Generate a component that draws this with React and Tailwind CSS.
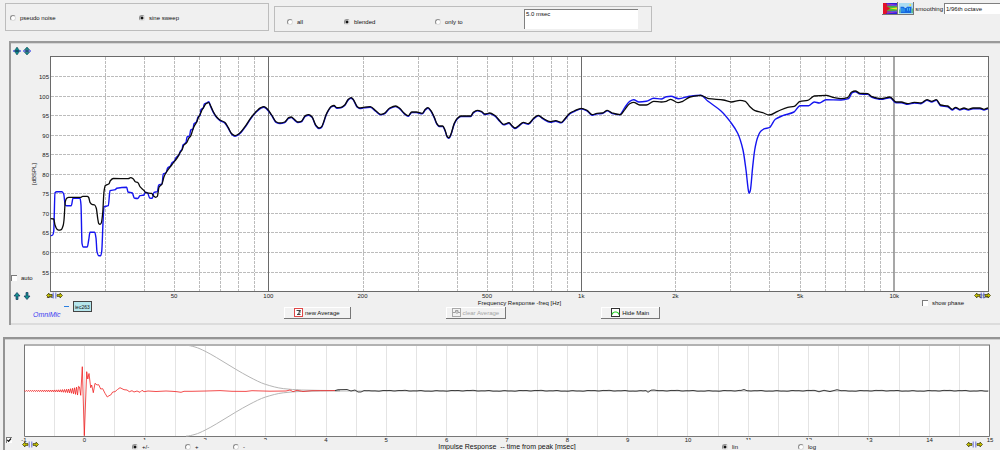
import React, { useState } from "react";

const BLACK_TRACE = [
  50.7,218.7, 53.7,219, 55,225, 57,229.3, 58.7,230.2, 61.3,229.6, 63.3,225, 64,220, 65.3,201.7, 66.7,198.2, 68.7,197.3, 81,197.3,
  82.7,196.3, 87.3,196.3, 88.7,197.5, 90,202.3, 92,204.3, 94.7,205, 96.3,208.3, 97.7,218.3, 98.7,223.5, 100,224.3, 101.3,223,
  102.7,213, 104,191.7, 105.3,185.5, 109,183.7, 110.3,180.7, 113.3,178.5, 128.3,178.6, 130.7,177.6, 133.3,179, 135.3,181.7,
  138,182.7, 140,186.7, 144,190.5, 145.7,192.7, 151.7,193.4, 153.3,195.7, 155.7,197.3, 157.3,196.4, 159,187.3, 162,184,
  164,176.7, 166.7,171.7, 171.7,165, 174.3,161.7, 176.7,158.7, 180,152.7, 182,150, 183.7,145.3, 186.7,142.7, 188.7,138.3,
  190.7,136, 192.7,130, 194.3,126, 196.7,122, 198.7,116.7, 200.3,114, 202,110, 204,106.7, 206,103.7, 208.7,102.7, 210.7,106,
  213.3,111.7, 216.7,117, 220,120, 224.7,122.3, 228.3,127.7, 231.7,133.7, 235,135.7, 239,133.7, 245,126.7, 251,117.7,
  256.7,111, 260.7,107.7, 263.7,106.7, 266.3,108, 271.7,115, 276,121.7, 280,123, 284.7,122, 288.7,117.7, 291.3,117,
  294.3,119.3, 297.7,122, 301.3,121.3, 305.3,115.7, 308.7,114.7, 312,116.7, 315.7,125, 319,128, 321.3,127, 326.7,113.3,
  331.3,106.3, 334,105.5, 337,107.7, 341,107.3, 344.7,105, 348.3,99.3, 351,97.7, 353,99, 357.3,106.7, 359.7,108, 363.7,107.3,
  370.3,106.7, 375.7,110.7, 380.7,114.3, 384.3,113.3, 389.7,108, 395.7,106, 399.7,108.3, 404.3,113.3, 408.3,115.7, 411.7,112,
  416.3,112, 422.3,113.3, 425.3,109.3, 428,107.7, 431,110.7, 434.3,117.3, 436.7,123.3, 439,126, 442.7,126, 445,130,
  447.3,136.7, 449,137.7, 451,134, 454.3,123.3, 457.3,118.3, 461,116, 470.7,116, 473.3,112.3, 477.3,110.3, 481.3,111.3,
  485,114, 489.7,113, 494.7,115.3, 499.7,120.7, 503.7,124.3, 509,122.7, 512.3,126, 515,128, 518.7,125.7, 523.3,122.3,
  528.3,123.7, 533.7,118.3, 538.3,115.3, 543,118.3, 550.3,121.7, 555.7,120.7, 561.3,122.3, 565,118.7, 569.7,113.3,
  574.7,110.7, 581.3,108.3, 587,110.3, 592.3,114.7, 597,113.3, 602.3,113, 607.3,110.3, 612.3,113, 620.3,114.7, 625,109.3,
  629.7,103.7, 633.7,102.3, 639.7,105, 646.3,105, 653.7,101.3, 661.3,102, 666.3,101.3, 670.7,99.3, 678,102.7, 682.7,101.3,
  690,97, 700.7,95.3, 708.7,98.7, 723.3,100, 731.3,102, 740,100.3, 745.3,101.3, 749.3,106, 755,110.7, 762.7,112.7, 769.3,115,
  777.7,111.3, 787.7,107.3, 794.3,106.3, 800,101.3, 807.7,100.3, 814.3,96, 826,95.3, 834.3,97.7, 841,98.7, 847.7,97.7,
  851.3,92.3, 855.3,91, 860,93.3, 867.7,93.7, 872,96.7, 881,98.7, 890,97, 896,102, 901.3,102, 907.7,103.7, 914.3,102.3,
  921,103, 927,99.7, 931.7,101.3, 936.3,99.7, 940.7,105, 947.7,106, 952.3,109.3, 955.7,107.3, 959.7,109.3, 964,108,
  968.3,109.3, 973,108, 980,108, 984,109.3, 988,108,
];

const BLUE_LOW = [
  50.7,235.7, 52.7,235, 53.7,231.7, 55,192.7, 56.7,191.7, 62,191.7, 63.7,194, 65.3,205, 66.7,205.7, 71.3,205.7, 73,198.3,
  80,198.3, 81,205, 82,243.3, 83.3,247, 87.3,247, 88.7,240, 90,232.3, 94.7,232.3, 96,238, 97,251.7, 98.7,255.7, 100.7,255.7,
  101.7,251.7, 103,223, 104,206.7, 108.3,205.7, 110,190.7, 115.3,189.7, 116.7,188.3, 126.7,187.3, 128,192, 132.3,193,
  134.3,198, 137.7,198.5, 140,195.7, 144,195, 145.3,192.3, 147.7,193.3, 149.7,198, 152.3,198.3, 154,192.3, 157.3,191.7,
  158.7,185, 162,184, 163.3,174, 166,172.7, 167.7,168, 170.5,166, 172,162.7, 174.5,161, 176,157.7, 179,155, 180.5,151,
  182,149.5, 183,145, 186,142.5, 187,137, 189.5,136, 190.7,130, 193,129, 194,123.7, 196.5,122, 198,117, 200,115.5, 201,109.5,
  203.3,108, 204.3,104, 207,102.8, 208.8,101.6, 210.7,106.7,
];

const BLUE_HIGH = [
  619.7,114.7, 624.7,107.7, 629.7,101.3, 633.7,99.7, 639,102, 646.3,101.3, 653.7,98.3, 661.3,99, 666.3,96.7, 671,96.3,
  678.7,98.7, 689.3,96.3, 700.7,95.3, 707.7,101, 721,111, 731,122.7, 737.7,133.3, 743,150, 746,170, 748.7,192, 749.3,193.3,
  750.3,190.7, 752.7,166.7, 754.7,150, 757.7,137.3, 761,131, 764.7,128.7, 769.3,127.7, 775.3,119.3, 782.7,115.7, 794,112,
  800,105.7, 808.7,105.7, 814.3,102, 819.3,103, 826,99.7, 841,100, 848.7,98.7, 852,92.9,
];

const toPoints = (flat, dy = 0) => {
  const out = [];
  for (let i = 0; i < flat.length; i += 2) out.push([flat[i], flat[i + 1] + dy]);
  return out;
};

// Smooth curve through all points; vertical handles are kept inside each segment to avoid overshoot.
const smooth = (pts) => {
  const slope = pts.map((p, i) => {
    if (i === 0 || i === pts.length - 1) return 0;
    const a = (p[1] - pts[i - 1][1]) / (p[0] - pts[i - 1][0]);
    const b = (pts[i + 1][1] - p[1]) / (pts[i + 1][0] - p[0]);
    return a * b <= 0 ? 0 : (2 * a * b) / (a + b);
  });
  let d = `M${pts[0][0]} ${pts[0][1]}`;
  for (let i = 1; i < pts.length; i++) {
    const [x0, y0] = pts[i - 1];
    const [x1, y1] = pts[i];
    const h = (x1 - x0) / 3;
    d += `C${(x0 + h).toFixed(2)} ${(y0 + slope[i - 1] * h).toFixed(2)} ${(x1 - h).toFixed(2)} ${(y1 - slope[i] * h).toFixed(2)} ${x1} ${y1}`;
  }
  return d;
};

const blackPts = toPoints(BLACK_TRACE);
const bluePts = [
  ...toPoints(BLUE_LOW),
  ...toPoints(BLACK_TRACE, 0.6).filter(([x]) => x > 211 && x < 619),
  ...toPoints(BLUE_HIGH),
  ...toPoints(BLACK_TRACE, 0.7).filter(([x]) => x > 853),
];
const blackPath = smooth(blackPts);
const bluePath = smooth(bluePts);

const freqX = (f) => 50.5 + (Math.log10(f / 20) / 3) * 938;
const minorFreqs = [30, 40, 50, 60, 70, 80, 90, 200, 300, 400, 500, 600, 700, 800, 900, 2000, 3000, 4000, 5000, 6000, 7000, 8000, 9000];
const levels = [105, 100, 95, 90, 85, 80, 75, 70, 65, 60, 55];
const levelY = (db) => Math.floor(76.5 + (105 - db) * 3.91) + 0.5;
const freqLabels = [[50, "50"], [100, "100"], [200, "200"], [500, "500"], [1000, "1k"], [2000, "2k"], [5000, "5k"], [10000, "10k"]];

// Impulse response samples
const ringing = () => {
  const pts = [];
  for (let x = 24.5; x < 79; x += 1) {
    const t = (x - 24.5) / 54.5;
    const amp = 0.5 + 3.6 * Math.pow(t, 7) + 0.7 * t;
    pts.push([x, 390.9 + (Math.round(x) % 2 ? -amp : amp)]);
  }
  return pts;
};
const wander = (from, to, amp) => {
  const pts = [];
  for (let x = from; x <= to; x += 2) {
    const v = Math.sin(x * 0.37) * 0.5 + Math.sin(x * 0.83 + 1) * 0.3 + Math.sin(x * 0.091) * 0.4;
    pts.push([x, 390.8 + v * amp]);
  }
  return pts;
};
const redPts = [
  ...ringing(),
  ...toPoints([
    79.5,387, 80.7,395.3, 82.3,366.7, 84.3,435.7, 86.7,371.7, 87.8,379, 89,373.5, 90.7,387.7, 91.7,385, 93.3,392.7, 95,383.3,
    97,385, 98.7,384.7, 100.7,389, 102.7,388.7, 105,393.3, 107.3,397, 109,395.7, 110.7,395, 112.7,392, 115,391.7, 117.5,389.5,
    120,387.7, 122,388.7, 124,389.7, 127,390, 129.3,391.7, 132,390.7, 134,392, 137,391, 140,392.3, 142,390.3, 144,391.7,
    148,391, 156,391.5, 166,391, 172,391.3, 177,391.7, 181,392.3, 184,391.3, 192,391.3, 206,391, 220,390.6, 232,391.3, 246,391.4, 252,390.7,
    270,391.2, 286,391, 290,390, 293,391.7, 297,390.3, 303,391.5, 312,390.7, 335,390.6,
  ]),
];
const tailPts = [
  ...toPoints([335,390.6, 338,389.7, 347,389.5, 351,391, 355,390, 358,392, 361,392, 364,390.6]),
  ...wander(367, 644, 0.5),
  ...toPoints([646,390.6, 648,392.3, 651,390.2, 654,390]),
  ...wander(657, 741, 0.5),
  ...toPoints([744,389.5, 747,390.7]),
  ...wander(751, 816, 0.5),
  ...toPoints([819,391.8, 824,390.3, 830,391.6, 837,389.7, 841,390.7]),
  ...wander(844, 989, 0.5),
];
const polyline = (pts) => pts.map(([x, y]) => `${x},${y.toFixed(2)}`).join(" ");
const windowTop = [186,345.3, 195,347, 205,351.2, 216.7,357.7, 235.3,369, 250,377.3, 265.3,384.3, 283.3,388.6, 301.7,390, 340,390.6];
const windowUpper = smooth(toPoints(windowTop));
const windowLower = smooth(toPoints(windowTop).map(([x, y]) => [x, 781.4 - y]));

const Radio = ({ name, label, checked, onChange, className = "" }) => (
  <label className={"flex items-center gap-1 whitespace-nowrap " + className}>
    <input
      type="radio"
      name={name}
      checked={checked}
      onChange={onChange}
      className="m-0 size-[6px] shrink-0 appearance-none rounded-full border border-[#8c8c8c] border-r-[#dcdcdc] border-b-[#dcdcdc] bg-white checked:bg-[radial-gradient(circle,#111_0_1px,#fff_2px)]"
    />
    {label}
  </label>
);

const Check = ({ label, checked, onChange, hideLabel, className = "" }) => (
  <label className={"relative flex items-center gap-1 whitespace-nowrap " + className}>
    <input
      type="checkbox"
      aria-label={hideLabel ? label : undefined}
      checked={checked}
      onChange={onChange}
      className="m-0 size-[6px] shrink-0 appearance-none border-t border-l border-[#7b7b7b] bg-white"
    />
    {checked && (
      <svg viewBox="0 0 6 6" className="pointer-events-none absolute left-px size-[6px]" fill="none" stroke="#111" strokeWidth="1.2">
        <path d="M1.3 2.8 2.6 4.4 5 1.5" />
      </svg>
    )}
    {!hideLabel && label}
  </label>
);

const IconButton = ({ label, children, className = "" }) => (
  <button type="button" aria-label={label} className={"block " + className}>
    {children}
  </button>
);

const ZoomIcon = ({ inward }) => (
  <svg viewBox="0 0 8 8" className="size-2">
    <path d="M0 4h8" stroke="#4a55e8" strokeWidth="1.4" />
    <path d={inward ? "M4 0 6.6 2.8H1.4zM4 8 6.6 5.2H1.4z" : "M4 0 6.4 3.4 4 4 1.6 3.4zM4 8 6.4 4.6 4 4 1.6 4.6z"} fill="#0e8a8c" stroke="#123c4c" strokeWidth=".5" />
    <path d="M2.4 4h3.2" stroke="#0e4f60" strokeWidth="1.6" />
  </svg>
);

const ArrowIcon = ({ down }) => (
  <svg viewBox="0 0 8 8" className="size-2">
    <g transform={down ? "rotate(180 4 4)" : undefined}>
      <path d="M4 .5 7 4H5v3.500H3V4H1z" fill="#12908c" stroke="#16305c" strokeWidth=".7" />
    </g>
  </svg>
);

const SpanIcon = ({ className }) => (
  <svg viewBox="0 0 17 7" className={"h-[7px] w-[17px] " + className}>
    <path d="M.5 3.500 3 1v1.600h3v1.800H3V6z" fill="#c9c400" stroke="#38380a" strokeWidth=".7" />
    <path d="M16.500 3.500 14 1v1.600h-3v1.800h3V6z" fill="#c9c400" stroke="#38380a" strokeWidth=".7" />
    <path d="M7.200 .5v6M9.800 .5v6" stroke="#5b62d8" strokeWidth=".9" />
  </svg>
);

const PushButton = ({ children, disabled }) => (
  <button
    type="button"
    disabled={disabled}
    className="flex h-3 items-center justify-center gap-[2px] border-r border-b border-[#777] bg-[#f2f2f2] px-[10px] whitespace-nowrap shadow-[inset_1px_1px_0_#fff] disabled:px-[6px] disabled:text-[#a5a5a5]"
  >
    {children}
  </button>
);

export default function App() {
  const [source, setSource] = useState("sine");
  const [mode, setMode] = useState("blended");
  const [auto, setAuto] = useState(false);
  const [phase, setPhase] = useState(false);
  const [impulse, setImpulse] = useState(true);
  const [polarity, setPolarity] = useState("both");
  const [scale, setScale] = useState("lin");

  return (
    <main className="flex h-screen flex-col overflow-hidden bg-[#f0f0f0] font-['Liberation_Sans',sans-serif] text-[6px] leading-[8px] text-[#111]">
      <header className="flex h-[41px] shrink-0 items-start pl-[5px]">
        <fieldset className="mt-[3px] flex h-7 w-[264px] items-center border border-[#bdbdbd] pt-[2px] pl-1">
          <Radio name="source" label="pseudo noise" checked={source === "noise"} onChange={() => setSource("noise")} className="w-[129px]" />
          <Radio name="source" label="sine sweep" checked={source === "sine"} onChange={() => setSource("sine")} />
        </fieldset>
        <fieldset className="mt-[6px] ml-[5px] flex h-[26px] w-[378px] items-center border border-[#bdbdbd] pl-3">
          <Radio name="mode" label="all" checked={mode === "all"} onChange={() => setMode("all")} className="w-[57px] pt-[6px]" />
          <Radio name="mode" label="blended" checked={mode === "blended"} onChange={() => setMode("blended")} className="w-[91px] pt-[6px]" />
          <Radio name="mode" label="only to" checked={mode === "only"} onChange={() => setMode("only")} className="w-[89px] pt-[6px]" />
          <textarea
            aria-label="time window"
            defaultValue="5.0 msec"
            className="block h-5 w-[114px] resize-none overflow-hidden border-t border-l border-[#808080] bg-white px-[1px] py-0 leading-[8px]"
          />
        </fieldset>
        <div className="mt-[2px] ml-auto flex items-center">
          <IconButton label="spectrogram" className="border-r border-b border-[#777] pt-px pl-px">
            <svg viewBox="0 0 14 10" className="h-[11px] w-[14px]" preserveAspectRatio="none">
              <rect width="14" height="10" fill="#2a22d8" />
              <path d="M4 .5 14 1.500v7L4 9.500z" fill="#b22ad8" />
              <path d="M0 0h3l1 1.200 10 1.200v5.200L4 8.800 3 10H0z" fill="#e3122a" />
              <path d="M4 3 14 3v4H4L2 5z" fill="#38cc44" />
              <path d="M0 1.500 8 5 0 8.500z" fill="#e3122a" />
              <path d="M6 5 14 4v2z" fill="#f2e522" />
              <path d="M4 1.800 14 2.600M4 8.200 14 7.400" stroke="#3c6cf0" strokeWidth=".9" />
            </svg>
          </IconButton>
          <IconButton label="distortion" className="border-r border-b border-[#777] pt-px pl-px">
            <svg viewBox="0 0 14 10" className="h-[11px] w-[14px]" preserveAspectRatio="none">
              <rect width="14" height="10" fill="#a9dcf2" />
              <path d="M1.500 9V3.500h3L6 4.500h1l1-1h4.500V9z" fill="#1668e0" />
              <path d="M3 4.500v3.500M5 5v3M8.500 4.500v2.500M10.500 4.500v2.500" stroke="#49c4f4" strokeWidth=".8" />
              <path d="M10.500 1H12v1.800h-1.500z" fill="#f0e34a" />
              <path d="M0 6h1.500v3H0zM12.500 5H14v4h-1.500z" fill="#58bd8c" />
            </svg>
          </IconButton>
          <label className="ml-px flex items-center gap-px">
            smoothing
            <select className="h-[11px] w-14 appearance-none border-t border-l border-[#808080] bg-white px-px" defaultValue="96">
              <option value="96">1/96th octave</option>
              <option value="48">1/48th octave</option>
            </select>
          </label>
        </div>
      </header>

      <section className="ml-[9px] shrink-0 border-t-2 border-l-2 border-[#9a9a9a]">
        <div className="border-b-2 border-[#dcdcdc] pb-[3px] shadow-[inset_0_1px_0_#d6d6d6]">
          <div className="flex h-[13px] items-end gap-[2px] pb-px pl-[2px]">
            <IconButton label="expand level range">
              <ZoomIcon />
            </IconButton>
            <IconButton label="shrink level range">
              <ZoomIcon inward />
            </IconButton>
          </div>

          <div className="flex pr-[11px]">
            <div className="flex w-[39px] flex-col">
              <svg viewBox="11 56 39 216" className="h-[216px] w-[39px] overflow-visible" fill="#222">
                {levels.map((db) => (
                  <text key={db} x="49" y={levelY(db) + 2} textAnchor="end" fontSize="6">
                    {db}
                  </text>
                ))}
                <text x="36" y="174" transform="rotate(-90 36 174)" textAnchor="middle" fontSize="6">
                  [dBSPL]
                </text>
              </svg>
              <Check label="auto" checked={auto} onChange={() => setAuto(!auto)} className="h-3" />
            </div>
            <svg viewBox="50 56 939 236" preserveAspectRatio="none" className="h-[236px] min-w-0 flex-1" fill="none">
              <rect x="50.5" y="56.5" width="938" height="235" fill="#fff" />
              <g stroke="#bcbcbc" strokeDasharray="3 1">
                {levels.map((db) => (
                  <path key={db} d={`M51 ${levelY(db)}H988`} />
                ))}
                {minorFreqs.map((f) => {
                  const x = Math.floor(freqX(f)) + 0.5;
                  return <path key={f} d={`M${x} 57V291`} />;
                })}
              </g>
              <path d="M268.500 57V291M581.500 57V291" stroke="#6a6a6a" />
              <path d="M894 57V291" stroke="#8a8a8a" strokeWidth="1.500" />
              <rect x="50.5" y="56.5" width="938" height="235" stroke="#6a6a6a" />
              <path d={bluePath} stroke="#1414f0" strokeWidth="1.400" />
              <path d={blackPath} stroke="#0a0a0a" strokeWidth="1.300" />
            </svg>
          </div>

          <div className="flex h-[7px] pr-[11px]">
            <div className="flex w-[39px] gap-[2px] pl-[2px]">
              <IconButton label="shift levels up">
                <ArrowIcon />
              </IconButton>
              <IconButton label="shift levels down">
                <ArrowIcon down />
              </IconButton>
            </div>
            <div className="relative min-w-0 flex-1">
              <svg className="block h-[7px] w-full overflow-visible" fill="#222">
                <text x="0" y="6" textAnchor="middle" fontSize="6">20</text>
                {freqLabels.map(([f, label]) => (
                  <text key={f} x={`${(((freqX(f) - 51) / 938) * 100).toFixed(2)}%`} y="6" textAnchor="middle" fontSize="6">
                    {label}
                  </text>
                ))}
                <text x="100%" y="6" textAnchor="end" fontSize="6">20k</text>
              </svg>
              <SpanIcon className="absolute top-0 -left-1" />
              <SpanIcon className="absolute top-0 -right-[2px]" />
            </div>
          </div>

          <div className="grid h-[8px] grid-cols-[1fr_auto_1fr] items-start pr-[11px] pl-[39px]">
            <div className="flex items-center gap-1 pt-[2px] pl-[14px]">
              <span className="h-px w-[5px] bg-[#2a7fe0]" />
              <button type="button" className="h-[11px] border border-[#444] bg-[#b5e6ec] px-px text-[5px] leading-[8px]">
                iec263
              </button>
            </div>
            <h2>Frequency Response -freq [Hz]</h2>
            <Check label="show phase" checked={phase} onChange={() => setPhase(!phase)} className="justify-self-end pr-[25px]" />
          </div>

          <div className="flex h-[13px] items-start">
            <span className="w-[273px] pt-px pl-[22px] text-[7px] leading-[14px] text-[#3c3cf0] italic">OmniMic</span>
            <div className="flex gap-[95px]">
              <PushButton>
                <svg viewBox="0 0 9 9" className="size-[9px]">
                  <rect x=".5" y=".5" width="8" height="8" fill="#fff" stroke="#e04848" />
                  <path d="M2.500 2.500h4L4.300 4.300M6 2.800v2L3.200 6.500H6.500" fill="none" stroke="#333" strokeWidth=".9" />
                </svg>
                new Average
              </PushButton>
              <PushButton disabled>
                <svg viewBox="0 0 9 9" className="size-[9px]">
                  <rect x=".5" y=".5" width="8" height="8" fill="#f2f2f2" stroke="#a9a9a9" />
                  <path d="M1 4.500h2.500V2.500H6v2h2M5 2v4" fill="none" stroke="#a0a0a0" />
                </svg>
                clear Average
              </PushButton>
              <PushButton>
                <svg viewBox="0 0 9 9" className="size-[9px]">
                  <rect x=".5" y=".5" width="8" height="8" fill="#fff" stroke="#333" />
                  <path d="M1 6.500C2 3.500 3 4 4.500 4S7 3.500 8 6.500" fill="none" stroke="#1fd21f" strokeWidth="1.200" />
                </svg>
                Hide Main
              </PushButton>
            </div>
          </div>
        </div>
      </section>

      <section className="mt-[12px] ml-[3px] flex-1 border-t-2 border-l-2 border-[#949494]">
        <div className="h-full pt-[5px] shadow-[inset_0_1px_0_#d0d0d0]">
          <div className="pr-[10px] pl-[19px]">
            <svg viewBox="24 344 966 93" preserveAspectRatio="none" className="block h-[93px] w-full" fill="none">
              <rect x="24.5" y="345" width="965" height="91.5" fill="#fff" />
              <g stroke="#e4e4e4">
                {Array.from({ length: 31 }, (_, i) => {
                  const x = Math.floor(54.6 + i * 30.16) + 0.5;
                  return <path key={i} d={`M${x} 344V436`} />;
                })}
              </g>
              <path d="M24 345H990" stroke="#b2b2b2" strokeWidth="2" />
              <path d="M24.500 345V436.500H989.500V345" stroke="#777" />
              <path d={windowUpper} stroke="#b5b5b5" />
              <path d={windowLower} stroke="#b5b5b5" />
              <polyline points={polyline(redPts)} stroke="#f02020" strokeWidth=".8" />
              <path d="M335 391H989" stroke="#8a8a8a" strokeWidth=".6" />
              <polyline points={polyline(tailPts)} stroke="#2a2a2a" strokeWidth=".9" />
            </svg>
          </div>

          <div className="flex h-[6px] pr-[10px]">
            <Check label="show impulse response" hideLabel checked={impulse} onChange={() => setImpulse(!impulse)} className="w-[19px] pl-[1px]" />
            <svg className="block h-[6px] min-w-0 flex-1 overflow-visible" fill="#222">
              {Array.from({ length: 17 }, (_, i) => (
                <text key={i} x={`${((i / 16) * 100).toFixed(2)}%`} y="5" textAnchor="middle" fontSize="6">
                  {i - 1}
                </text>
              ))}
            </svg>
          </div>

          <div className="relative -mt-[3px] grid grid-cols-[1fr_auto_1fr] items-start pr-[10px] pl-[19px]">
            <SpanIcon className="absolute top-px left-[17px]" />
            <div className="ml-[108px] flex h-4 w-[138px] items-start bg-[#f0f0f0] pt-[3px]">
              <Radio name="polarity" label="+/-" checked={polarity === "both"} onChange={() => setPolarity("both")} className="w-[53px]" />
              <Radio name="polarity" label="+" checked={polarity === "plus"} onChange={() => setPolarity("plus")} className="w-[48px]" />
              <Radio name="polarity" label="-" checked={polarity === "minus"} onChange={() => setPolarity("minus")} />
            </div>
            <h2 className="pt-[3px] text-[7px] leading-[8px] whitespace-pre">{"Impulse Response  -- time from peak [msec]"}</h2>
            <div className="mr-[121px] flex h-4 w-[147px] items-start justify-self-end bg-[#f0f0f0] pt-[3px]">
              <Radio name="scale" label="lin" checked={scale === "lin"} onChange={() => setScale("lin")} className="w-[76px]" />
              <Radio name="scale" label="log" checked={scale === "log"} onChange={() => setScale("log")} />
            </div>
            <SpanIcon className="absolute top-px right-[17px]" />
          </div>
        </div>
      </section>
    </main>
  );
}
